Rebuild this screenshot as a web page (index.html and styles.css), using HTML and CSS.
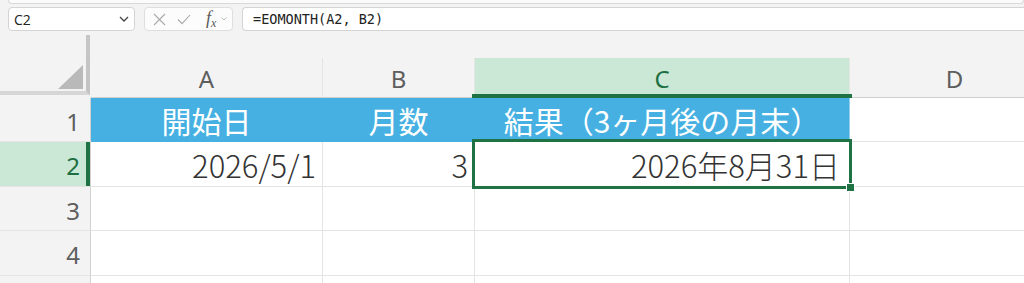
FILE: index.html
```html
<!DOCTYPE html>
<html lang="ja">
<head>
<meta charset="utf-8">
<title>EOMONTH</title>
<link rel="stylesheet" href="styles.css">
</head>
<body>
<div class="ribbon"></div>

<!-- formula bar -->
<div class="fbar">
  <div class="namebox">
    <span>C2</span>
    <svg width="10" height="6" viewBox="0 0 10 6"><path d="M1 1l4 4 4-4" fill="none" stroke="#444" stroke-width="1.3"/></svg>
  </div>
  <div class="fxbox">
    <svg width="13" height="13" viewBox="0 0 13 13"><path d="M1 1l11 11M12 1L1 12" fill="none" stroke="#a9a9a9" stroke-width="1.1"/></svg>
    <svg width="14" height="11" viewBox="0 0 14 11"><path d="M1 5.5l4 4.2L13 1" fill="none" stroke="#a9a9a9" stroke-width="1.1"/></svg>
    <span class="fx">f<sub>x</sub></span>
    <svg width="6" height="4" viewBox="0 0 6 4"><path d="M.5.5L3 3 5.5.5" fill="none" stroke="#bdbdbd" stroke-width="1"/></svg>
  </div>
  <div class="formula">=EOMONTH(A2, B2)</div>
</div>

<div class="split"><div class="split-bar"></div></div>

<!-- sheet -->
<div class="sheet">
  <div class="corner"><div class="corner-in">
    <svg width="25" height="24" viewBox="0 0 25 24"><polygon points="25,0 25,24 0,24" fill="#b9b9b9"/></svg>
  </div></div>
  <div class="hd">A</div>
  <div class="hd">B</div>
  <div class="hd sel">C</div>
  <div class="hd last">D</div>

  <div class="rh">1</div>
  <div class="c title">開始日</div>
  <div class="c title">月数</div>
  <div class="c title">結果（3ヶ月後の月末）</div>
  <div class="c last"></div>

  <div class="rh sel">2</div>
  <div class="c">2026/5/1</div>
  <div class="c">3</div>
  <div class="c active">2026年8月31日<span class="handle"></span></div>
  <div class="c last"></div>

  <div class="rh">3</div>
  <div class="c"></div>
  <div class="c"></div>
  <div class="c"></div>
  <div class="c last"></div>

  <div class="rh">4</div>
  <div class="c"></div>
  <div class="c"></div>
  <div class="c"></div>
  <div class="c last"></div>

  <div class="rh"></div>
  <div class="c"></div>
  <div class="c"></div>
  <div class="c"></div>
  <div class="c last"></div>
</div>
</body>
</html>
```

FILE: styles.css
```css
html, body {
	margin		: 0;
}
body {
	background	: #f3f3f3;
	width		: 1024px;
	height		: 283px;
	overflow	: hidden;
	font-family	: "Noto Sans", sans-serif;
}

/* top edge of the ribbon */
.ribbon {
	height		: 3px;
	margin-left	: 8px;
	background	: #fbfbfb;
	border		: 1px solid #d8d8d8;
	border-top	: none;
	border-radius	: 0 0 5px 5px;
}

/* formula bar */
.fbar {
	display		: flex;
	gap		: 9px;
	height		: 24px;
	margin-top	: 3px;
	padding-left	: 8px;
}
.namebox, .fxbox, .formula {
	box-sizing	: border-box;
	background	: #fff;
	border		: 1px solid #d4d4d4;
	border-radius	: 4px;
	display		: flex;
	align-items	: center;
}
.namebox {
	width		: 127px;
	justify-content	: space-between;
	padding		: 0 5px 0 5px;
	font-family	: "Open Sans", sans-serif;
	font-size	: 14px;
	color		: #222;
}
.fxbox {
	width		: 89px;
	padding-left	: 8px;
	background	: #fcfcfc;
	border-color	: #dedede;
}
.fxbox svg:nth-child(2) { margin-left: 11px; }
.fx {
	margin-left	: 15px;
	font-family	: "Liberation Serif", serif;
	font-style	: italic;
	font-size	: 18px;
	line-height	: 1;
	color		: #5a5a5a;
}
.fx sub {
	font-size	: 12px;
	vertical-align	: -3px;
}
.fxbox svg:last-child { margin-left: 5px; }
.formula {
	flex		: 1;
	border-right	: none;
	border-radius	: 4px 0 0 4px;
	padding-left	: 10px;
	font-family	: "DejaVu Sans Mono", monospace;
	font-size	: 13.5px;
	color		: #222;
}

.split {
	height		: 27px;
	overflow	: hidden;
}
.split-bar {
	margin		: 4px 0 0 86px;
	width		: 4px;
	height		: 23px;
	background	: #c6c6c6;
}

/* grid */
.sheet {
	display		: grid;
	grid-template-columns	: 91px 232px 152px 375px 210px;
	grid-template-rows	: 40px 44px 45px 44px 45px 44px;
	width		: 1060px;
}
.corner {
	background	: #f3f3f3;
}
.corner-in {
	box-sizing	: border-box;
	width		: 90px;
	height		: 37px;
	border-right	: 4px solid #c4c4c4;
	border-bottom	: 4px solid #d6d6d6;
	display		: flex;
	align-items	: flex-end;
	justify-content	: flex-end;
	padding		: 0 3px 2px 0;
}
.hd, .rh {
	box-sizing	: border-box;
	background	: #f3f3f3;
	display		: flex;
	align-items	: center;
	font-size	: 24px;
	color		: #5e5e5e;
}
.hd {
	justify-content	: center;
	padding-top	: 2px;
	border-right	: 1px solid #e4e4e4;
	border-bottom	: 1px solid #cfcfcf;
}
.hd.sel {
	position	: relative;
	background	: #cbe8d6;
	color		: #1d6f42;
}
.hd.sel::after {
	content		: "";
	position	: absolute;
	left		: -3px;
	right		: -3px;
	bottom		: -1px;
	height		: 4px;
	background	: #1f7244;
}
.rh {
	justify-content	: flex-end;
	padding		: 3px 10px 0 0;
	border-right	: 1px solid #d2d2d2;
	border-bottom	: 1px solid #e4e4e4;
}
.rh.sel {
	background	: #cbe8d6;
	color		: #1d6f42;
	box-shadow	: inset -4px 0 #1f7244;
}

.c {
	box-sizing	: border-box;
	background	: #fff;
	border-right	: 1px solid #e4e4e4;
	border-bottom	: 1px solid #e4e4e4;
	display		: flex;
	align-items	: center;
	justify-content	: flex-end;
	padding-right	: 6px;
	font-family	: "Noto Sans CJK JP", sans-serif;
	font-size	: 31px;
	font-weight	: 300;
	line-height	: 1;
	color		: #333;
	white-space	: nowrap;
}
.c.last { border-right: none; }
.c.title {
	background	: #45b0e1;
	color		: #fff;
	font-size	: 30px;
	font-weight	: 400;
	justify-content	: center;
	padding		: 0;
	border-right-color	: #45b0e1;
	border-bottom-color	: #45b0e1;
}
.c.title:nth-child(9) { border-right-color: #8fd0ee; }
.c.active {
	position	: relative;
	padding-right	: 9px;
}
.c.active::before {
	content		: "";
	position	: absolute;
	left		: -3px;
	top		: -3px;
	right		: -3px;
	bottom		: -3px;
	border		: 3px solid #1f7244;
	z-index		: 2;
}
.handle {
	position	: absolute;
	right		: -6px;
	bottom		: -6px;
	width		: 7px;
	height		: 7px;
	background	: #1f7244;
	border		: 1px solid #fff;
	z-index		: 3;
}
```
